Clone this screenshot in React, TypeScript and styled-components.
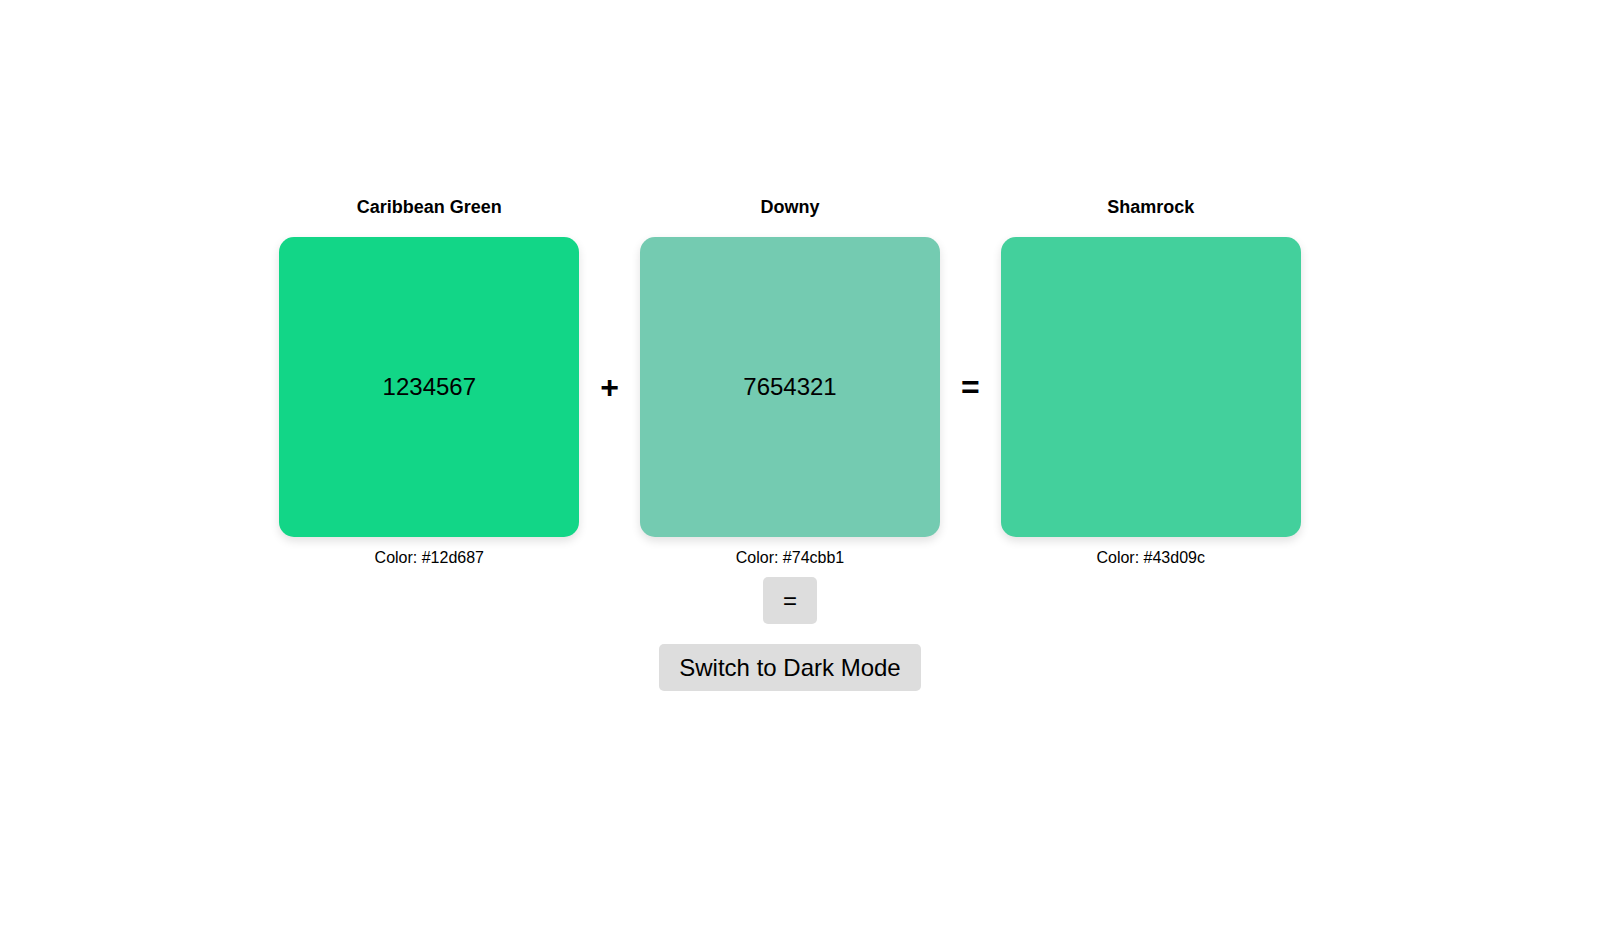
import React from "react";
import styled, { createGlobalStyle } from "styled-components";

const GlobalStyle = createGlobalStyle`
  html, body {
    margin: 0;
    padding: 0;
    background: #ffffff;
  }
  body {
    font-family: "Liberation Sans", Arial, sans-serif;
    color: #000000;
  }
`;

const Page = styled.main`
  box-sizing: border-box;
  min-height: 100vh;
  padding: 197px 31px 0 0;
  display: flex;
  flex-direction: column;
  align-items: center;
`;

const Mixer = styled.section`
  display: grid;
  grid-template-columns: 300px auto 300px auto 300px;
  grid-template-rows: auto 300px auto;
  column-gap: 21px;
  align-items: center;
  justify-items: center;
`;

const Title = styled.h3<{ $col: number }>`
  grid-row: 1;
  grid-column: ${(p) => p.$col};
  margin: 0 0 19px;
  font-size: 18px;
  font-weight: bold;
  line-height: 21px;
`;

const Swatch = styled.div<{ $color: string; $col: number }>`
  grid-row: 2;
  grid-column: ${(p) => p.$col};
  width: 300px;
  height: 300px;
  border-radius: 15px;
  background: ${(p) => p.$color};
  box-shadow: 0 4px 10px rgba(0, 0, 0, 0.12);
  display: flex;
  align-items: center;
  justify-content: center;
  font-size: 24px;
`;

const Operator = styled.span<{ $col: number }>`
  grid-row: 2;
  grid-column: ${(p) => p.$col};
  font-size: 32px;
  font-weight: bold;
  line-height: 1;
`;

const Label = styled.p<{ $col: number }>`
  grid-row: 3;
  grid-column: ${(p) => p.$col};
  margin: 12px 0 0;
  font-size: 16px;
  line-height: 18px;
`;

const Actions = styled.div`
  margin-top: 10px;
  display: flex;
  flex-direction: column;
  align-items: center;
  gap: 20px;
`;

const Button = styled.button`
  font-family: "Liberation Sans", Arial, sans-serif;
  font-size: 24px;
  line-height: 27px;
  padding: 10px 20px;
  border: none;
  border-radius: 5px;
  background: #dddddd;
  color: #000000;
  cursor: pointer;
`;

const colors = [
  { name: "Caribbean Green", hex: "#12d687", value: "1234567" },
  { name: "Downy", hex: "#74cbb1", value: "7654321" },
  { name: "Shamrock", hex: "#43d09c", value: "" },
];

export default function App() {
  return (
    <>
      <GlobalStyle />
      <Page>
        <Mixer>
          {colors.map((c, i) => (
            <Title key={"t" + i} $col={i * 2 + 1}>
              {c.name}
            </Title>
          ))}
          <Swatch $color={colors[0].hex} $col={1}>
            {colors[0].value}
          </Swatch>
          <Operator $col={2}>+</Operator>
          <Swatch $color={colors[1].hex} $col={3}>
            {colors[1].value}
          </Swatch>
          <Operator $col={4}>=</Operator>
          <Swatch $color={colors[2].hex} $col={5}>
            {colors[2].value}
          </Swatch>
          {colors.map((c, i) => (
            <Label key={"l" + i} $col={i * 2 + 1}>
              Color: {c.hex}
            </Label>
          ))}
        </Mixer>
        <Actions>
          <Button>=</Button>
          <Button>Switch to Dark Mode</Button>
        </Actions>
      </Page>
    </>
  );
}
